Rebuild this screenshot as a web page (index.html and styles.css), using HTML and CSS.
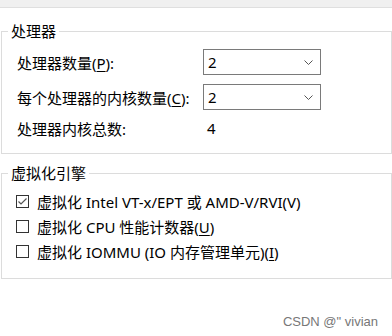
FILE: index.html
```html
<!DOCTYPE html>
<html lang="zh-CN">
<head>
    <meta charset="UTF-8">
    <meta name="viewport" content="width=device-width, initial-scale=1.0">
    <title>处理器</title>
    <link rel="stylesheet" href="styles.css">
</head>
<body>
    <div class="topbar"></div>

    <fieldset class="group">
        <legend>处理器</legend>
        <div class="form-grid">
            <label>处理器数量(<u>P</u>):</label>
            <div class="select">
                <span>2</span>
                <svg class="chevron" width="9" height="5" viewBox="0 0 9 5"><polyline points="0.5,0.5 4.5,4.5 8.5,0.5" fill="none" stroke="#555" stroke-width="1"/></svg>
            </div>
            <label>每个处理器的内核数量(<u>C</u>):</label>
            <div class="select">
                <span>2</span>
                <svg class="chevron" width="9" height="5" viewBox="0 0 9 5"><polyline points="0.5,0.5 4.5,4.5 8.5,0.5" fill="none" stroke="#555" stroke-width="1"/></svg>
            </div>
            <span>处理器内核总数:</span>
            <span class="value">4</span>
        </div>
    </fieldset>

    <fieldset class="group group-engine">
        <legend>虚拟化引擎</legend>
        <div class="checks">
            <label class="check">
                <span class="box"><svg width="11" height="11" viewBox="0 0 11 11"><polyline points="1.5,5.5 4,8 9.5,2.5" fill="none" stroke="#555" stroke-width="1.2"/></svg></span>
                <span>虚拟化 Intel VT-x/EPT 或 AMD-V/RVI(V)</span>
            </label>
            <label class="check">
                <span class="box"></span>
                <span>虚拟化 CPU 性能计数器(<u>U</u>)</span>
            </label>
            <label class="check">
                <span class="box"></span>
                <span>虚拟化 IOMMU (IO 内存管理单元)(<u>I</u>)</span>
            </label>
        </div>
    </fieldset>

    <div class="watermark">CSDN @" vivian</div>
</body>
</html>
```

FILE: styles.css
```css
* {
    margin: 0;
    padding: 0;
    box-sizing: border-box;
}

body {
    background-color: #fff;
    color: #000;
    font-family: "Noto Sans", "Noto Sans CJK SC", sans-serif;
    font-size: 15px;
    width: 392px;
    height: 336px;
    overflow: hidden;
}

.topbar {
    height: 8px;
    background-color: #f0f0f0;
    border-bottom: 1px solid #dfdfdf;
}

.group {
    margin: 13px 0 0 1px;
    border: 1px solid #dcdcdc;
    min-width: 0;
}

.group-engine {
    margin-top: 9px;
}

.group legend {
    margin-left: 6px;
    padding: 0 3px;
    line-height: 20px;
}

.form-grid {
    display: grid;
    grid-template-columns: 186px 118px;
    grid-template-rows: 26px 26px 18px;
    row-gap: 9px;
    align-items: center;
    padding: 8px 0 16px 15px;
}

.select {
    height: 26px;
    border: 1px solid #7a7a7a;
    display: flex;
    align-items: center;
    justify-content: space-between;
    padding: 0 7px 0 4px;
}

.value {
    padding-left: 4px;
}

u {
    text-underline-offset: 2px;
}

.checks {
    display: flex;
    flex-direction: column;
    padding: 6px 0 14px 14px;
}

.check {
    height: 25px;
    display: flex;
    align-items: center;
    gap: 8px;
}

.box {
    width: 13px;
    height: 13px;
    border: 1px solid #333;
    display: flex;
    align-items: center;
    justify-content: center;
}

.watermark {
    margin-top: 35px;
    padding-right: 14px;
    text-align: right;
    font-family: "Liberation Sans", Arial, sans-serif;
    font-size: 13px;
    line-height: 16px;
    color: #777;
}
```
